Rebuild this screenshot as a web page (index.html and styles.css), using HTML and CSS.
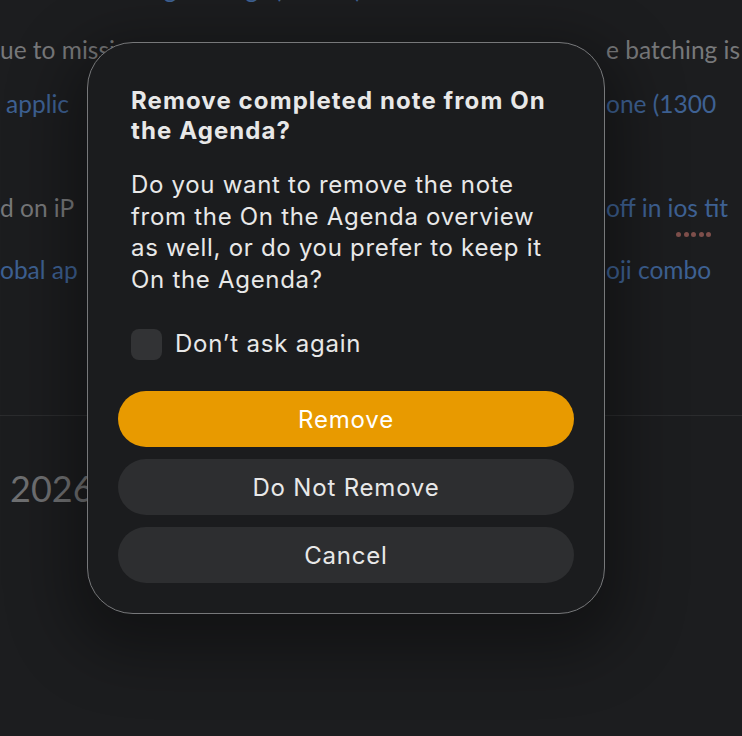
FILE: index.html
```html
<!DOCTYPE html>
<html lang="en">
<head>
<meta charset="utf-8">
<title>Remove completed note</title>
<link rel="stylesheet" href="styles.css">
</head>
<body>
<div class="page">
  <div class="notes">
    <div class="line l1"><span class="frag blue">ng Settings (iPhone)</span></div>
    <div class="line l2"><span class="frag grey">ue to missi</span><span class="right grey">e batching is</span></div>
    <div class="line l3"><span class="frag blue indent">applic</span><span class="right blue">one (1300</span></div>
    <div class="line l4"><span class="frag grey">d on iP</span><span class="right blue">off in ios tit</span></div>
    <div class="dots"><i></i><i></i><i></i><i></i><i></i></div>
    <div class="line l5"><span class="frag blue">obal ap</span><span class="right blue">oji combo</span></div>
  </div>
  <div class="lower">
    <div class="year">2026</div>
  </div>
</div>

<div class="dialog" role="alertdialog">
  <h1 class="title">Remove completed note from On<br>the Agenda?</h1>
  <p class="message">Do you want to remove the note<br>from the On the Agenda overview<br>as well, or do you prefer to keep it<br>On the Agenda?</p>
  <label class="check"><span class="box"></span><span class="check-label">Don’t ask again</span></label>
  <div class="buttons">
    <button class="btn primary">Remove</button>
    <button class="btn">Do Not Remove</button>
    <button class="btn">Cancel</button>
  </div>
</div>
</body>
</html>
```

FILE: styles.css
```css
html, body {
  margin: 0;
  padding: 0;
  background: #1c1d1f;
  height: 100%;
  overflow: hidden;
}

body {
  font-family: Lato, "Noto Sans", sans-serif;
}

.page {
  height: 736px;
  display: flex;
  flex-direction: column;
}

.notes {
  height: 416px;
  border-bottom: 1px solid #2b2c2e;
  box-sizing: border-box;
  font-size: 24.5px;
}

.line {
  display: grid;
  grid-template-columns: 605px 1fr;
  white-space: nowrap;
  overflow: hidden;
  height: 30px;
  line-height: 30px;
}

.l1 { margin-top: -26px; }
.l2 { margin-top: 31px; }
.l3 { margin-top: 24px; }
.l4 { margin-top: 74px; }
.l5 { margin-top: 17px; }

.indent { padding-left: 6px; }
.right { padding-left: 1px; }
.l1 .frag { padding-left: 150px; }

.grey { color: #77787a; }
.blue { color: #3e6193; }

.dots {
  display: flex;
  gap: 2.5px;
  padding-left: 676px;
  margin-top: 9px;
  height: 6px;
}
.dots i {
  width: 5px;
  height: 5px;
  border-radius: 50%;
  background: #7e4f4b;
}

.lower {
  flex: 1;
  padding: 52px 0 0 10px;
}

.year {
  font-size: 36px;
  color: #6f7072;
  line-height: 40px;
}

.dialog {
  position: absolute;
  left: 87px;
  top: 42px;
  width: 518px;
  height: 572px;
  box-sizing: border-box;
  background: #1b1c1e;
  border: 1.5px solid #77787a;
  border-radius: 46px;
  box-shadow: 0 20px 60px 20px rgba(0, 0, 0, 0.35);
  padding: 43px 30px 0 30px;
  font-family: Inter, "Noto Sans", sans-serif;
  color: #e8e8e8;
}

.title {
  margin: 0 13px;
  font-size: 24px;
  font-weight: 700;
  line-height: 30px;
  letter-spacing: 1.1px;
  white-space: nowrap;
}

.message {
  margin: 23px 13px 0;
  font-size: 24px;
  font-weight: 400;
  line-height: 31.5px;
  letter-spacing: 0.7px;
  white-space: nowrap;
}

.check {
  display: flex;
  align-items: center;
  gap: 13px;
  margin: 33px 13px 0;
}

.box {
  width: 31px;
  height: 31px;
  border-radius: 8px;
  background: #323335;
}

.check-label {
  font-size: 24px;
  line-height: 32px;
  letter-spacing: 0.8px;
}

.buttons {
  display: flex;
  flex-direction: column;
  gap: 12px;
  margin-top: 31px;
}

.btn {
  height: 56px;
  border: none;
  border-radius: 28px;
  background: #2d2e30;
  color: #e8e8e8;
  font-family: Inter, "Noto Sans", sans-serif;
  font-size: 24px;
  letter-spacing: 0.8px;
  padding: 0;
}

.btn.primary {
  background: #e89a00;
  color: #ffffff;
}
```
